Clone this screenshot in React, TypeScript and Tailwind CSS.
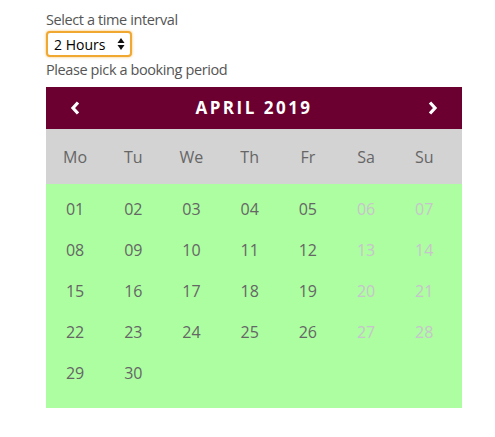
import React from "react";

const rows: (string | null)[][] = [
  ["01", "02", "03", "04", "05", "06", "07"],
  ["08", "09", "10", "11", "12", "13", "14"],
  ["15", "16", "17", "18", "19", "20", "21"],
  ["22", "23", "24", "25", "26", "27", "28"],
  ["29", "30", null, null, null, null, null],
];
const days = ["Mo", "Tu", "We", "Th", "Fr", "Sa", "Su"];

export default function App() {
  return (
    <div
      className="bg-white w-[495px] h-[437px] pl-[46px] pt-[9px] text-[#555]"
      style={{ fontFamily: '"Open Sans", "Noto Sans", sans-serif' }}
    >
      <div className="text-[14.5px] leading-[21px] tracking-[-0.4px]">Select a time interval</div>
      <div className="mt-[1px] w-[86px] h-[26px] rounded-[4px] border-2 border-[#f0a830] shadow-[0_0_3px_#f5c070] bg-white flex items-center justify-between pl-[6px] pr-[5px] text-[14px] text-black">
        <span>2 Hours</span>
        <svg width="8" height="14" viewBox="0 0 8 14">
          <path d="M4 1 L7.5 6 L0.5 6 Z" fill="#111" />
          <path d="M4 13 L7.5 8 L0.5 8 Z" fill="#111" />
        </svg>
      </div>
      <div className="text-[14.5px] leading-[21px] mt-[2px] tracking-[-0.4px]">Please pick a booking period</div>
      <div className="w-[416px] mt-[7px]">
        <div className="h-[42px] bg-[#6b0030] flex items-center justify-between px-[24px] text-white">
          <svg width="10" height="14" viewBox="0 0 10 14">
            <path d="M8 1.5 L3 7 L8 12.5" stroke="white" strokeWidth="3.2" fill="none" />
          </svg>
          <span className="text-[17px] font-bold tracking-[2.5px]">APRIL 2019</span>
          <svg width="10" height="14" viewBox="0 0 10 14">
            <path d="M2 1.5 L7 7 L2 12.5" stroke="white" strokeWidth="3.2" fill="none" />
          </svg>
        </div>
        <div className="h-[55px] bg-[#d3d3d3] grid grid-cols-[repeat(7,58.2px)] items-center text-[16px] font-medium text-[#666]">
          {days.map((d) => (
            <div key={d} className="text-center">{d}</div>
          ))}
        </div>
        <div className="bg-[#acfea0] pt-[4px] h-[224px]">
          {rows.map((r, i) => (
            <div key={i} className="h-[41px] grid grid-cols-[repeat(7,58.2px)] items-center text-[16px] font-medium">
              {r.map((d, j) => (
                <div key={j} className={"text-center " + (j >= 5 ? "text-[#c8c4cc]" : "text-[#666]")}>
                  {d ?? ""}
                </div>
              ))}
            </div>
          ))}
        </div>
      </div>
    </div>
  );
}
